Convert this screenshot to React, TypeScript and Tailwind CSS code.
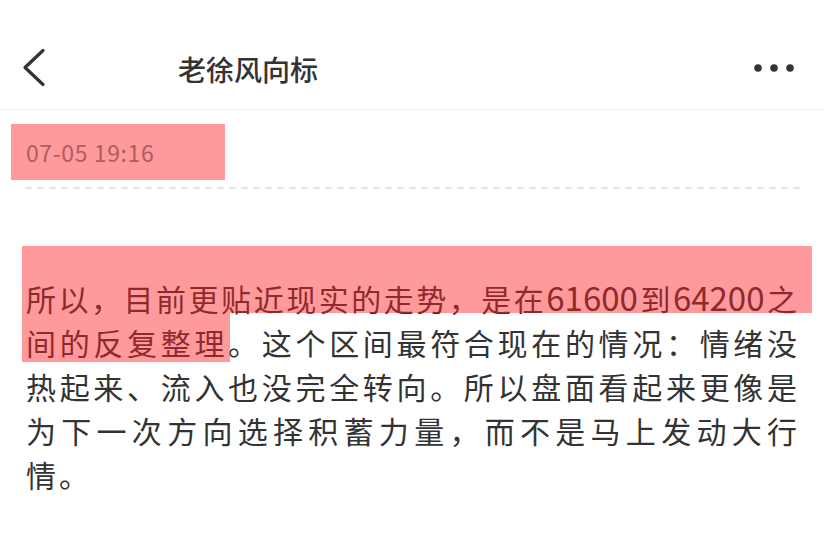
import React from 'react';

const lines = [
  '间的反复整理。这个区间最符合现在的情况：情绪没',
  '热起来、流入也没完全转向。所以盘面看起来更像是',
  '为下一次方向选择积蓄力量，而不是马上发动大行',
];

const Num: React.FC<{ children: React.ReactNode }> = ({ children }) => (
  <span className="font-['Liberation_Sans_Narrow','Noto_Sans_CJK_SC',sans-serif] text-[33px] tracking-normal">
    {children}
  </span>
);

export default function App() {
  return (
    <div className="w-[824px] h-[542px] overflow-hidden bg-white text-[#333] font-['Noto_Sans_CJK_SC',sans-serif]">
      {/* top bar */}
      <div className="flex items-start h-[110px] pt-[48px] border-b border-[#efefef]">
        <svg className="ml-[22px]" width="24" height="40" viewBox="0 0 24 40" fill="none">
          <path d="M21 2.5 L3 19.5 L21 36.5" stroke="#333" strokeWidth="3.2" strokeLinecap="round" strokeLinejoin="round" />
        </svg>
        <h1 className="ml-[132px] text-[28px] leading-[42px] font-medium text-[#333]">老徐风向标</h1>
        <svg className="ml-auto mr-[27px] mt-[15px]" width="44" height="10" viewBox="0 0 44 10">
          <circle cx="5" cy="5" r="3.8" fill="#333" />
          <circle cx="21" cy="5" r="3.8" fill="#333" />
          <circle cx="37" cy="5" r="3.8" fill="#333" />
        </svg>
      </div>

      {/* time, marked */}
      <div className="mt-[14px] ml-[11px] w-[214px] h-[56px] flex items-center pl-[15px] bg-[#fe9a9b]">
        <span className="text-[23px] tracking-[0.6px] text-[#b05c5f]">07-05 19:16</span>
      </div>

      <div className="mx-[25px] mt-[7px] h-[2px] w-[775px] bg-[repeating-linear-gradient(90deg,#e6e6e6_0_7px,transparent_7px_12px)]" />

      {/* paragraph */}
      <div className="relative mt-[86px] pl-[26px] pr-[27px] text-[30px] leading-[44px] text-[#333]">
        <div className="text-justify [text-align-last:justify] whitespace-nowrap">
          所以，目前更贴近现实的走势，是在<Num>61600</Num>到<Num>64200</Num>之
        </div>
        {lines.map(l => (
          <div key={l} className="text-justify [text-align-last:justify]">
            {l}
          </div>
        ))}
        <div className="tracking-[3px]">情。</div>

        {/* highlight marks */}
        <div className="absolute left-[22px] top-[-29px] w-[790px] h-[67px] bg-[rgba(255,30,35,0.45)]" />
        <div className="absolute left-[22px] top-[38px] w-[208px] h-[49px] bg-[rgba(255,30,35,0.45)]" />
      </div>
    </div>
  );
}
